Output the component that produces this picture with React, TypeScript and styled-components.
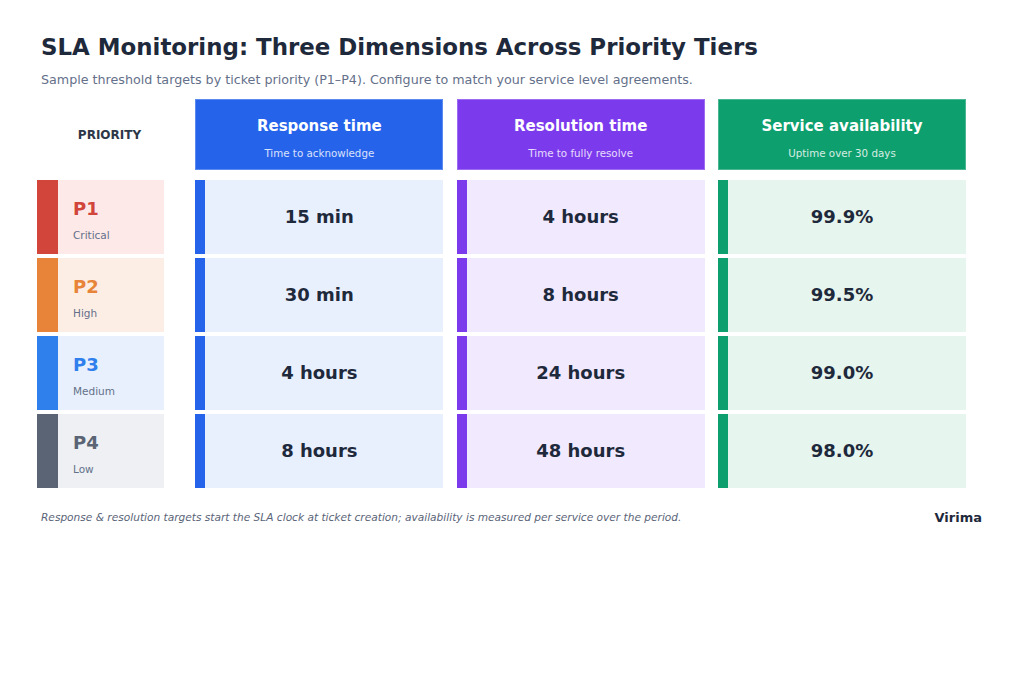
import { Fragment } from "react";
import styled, { createGlobalStyle } from "styled-components";

const GlobalStyle = createGlobalStyle`
  html, body {
    margin: 0;
    padding: 0;
    background: #ffffff;
  }
  body {
    font-family: "DejaVu Sans", "Liberation Sans", sans-serif;
    color: #1e293b;
  }
`;

const Page = styled.div`
  width: 1024px;
  height: 691px;
  box-sizing: border-box;
  padding: 33px 42px 0 41px;
`;

const Title = styled.h1`
  margin: 0;
  font-size: 22.9px;
  font-weight: 700;
  color: #1e293b;
  line-height: 28px;
`;

const Subtitle = styled.p`
  margin: 10px 0 0 0;
  font-size: 12.7px;
  color: #64708a;
  line-height: 18px;
`;

const Grid = styled.div`
  display: grid;
  grid-template-columns: 145px repeat(3, 248px);
  column-gap: 13.34px;
  margin-left: -4px;
`;

const HeaderGrid = styled(Grid)`
  margin-top: 10px;
  grid-template-rows: 71px;
`;

const BodyGrid = styled(Grid)`
  margin-top: 10px;
  grid-auto-rows: 73.5px;
  row-gap: 4.5px;
`;

const PriorityLabel = styled.div`
  display: flex;
  align-items: center;
  justify-content: center;
  font-size: 12px;
  font-weight: 700;
  color: #2d3748;
`;

const HeaderCell = styled.div<{ $color: string }>`
  background: ${(p) => p.$color};
  box-shadow: inset 0 0 0 1px rgba(255, 255, 255, 0.25);
  box-sizing: border-box;
  padding-top: 17px;
  display: flex;
  flex-direction: column;
  align-items: center;
  color: #ffffff;
`;

const HeaderTitle = styled.div`
  font-size: 15px;
  font-weight: 700;
  line-height: 20px;
`;

const HeaderSub = styled.div`
  font-size: 10.3px;
  line-height: 14px;
  margin-top: 10px;
  opacity: 0.82;
`;

const PriorityCell = styled.div<{ $strip: string; $bg: string }>`
  width: 127px;
  box-sizing: border-box;
  background: ${(p) => p.$bg};
  border-left: 21px solid ${(p) => p.$strip};
  padding: 18px 0 0 15px;
  display: flex;
  flex-direction: column;
`;

const PriorityCode = styled.div<{ $color: string }>`
  font-size: 18px;
  font-weight: 700;
  line-height: 22px;
  color: ${(p) => p.$color};
`;

const PriorityName = styled.div`
  font-size: 10.5px;
  line-height: 14px;
  margin-top: 8px;
  color: #64708a;
`;

const ValueCell = styled.div<{ $strip: string; $bg: string }>`
  background: ${(p) => p.$bg};
  border-left: 10px solid ${(p) => p.$strip};
  padding-right: 10px;
  display: flex;
  align-items: center;
  justify-content: center;
  font-size: 18px;
  font-weight: 700;
  color: #1e293b;
`;

const Footer = styled.div`
  margin-top: 22px;
  display: flex;
  justify-content: space-between;
  align-items: center;
`;

const FooterNote = styled.div`
  font-size: 10.6px;
  font-style: italic;
  color: #5a6478;
`;

const Brand = styled.div`
  font-size: 13px;
  font-weight: 700;
  color: #1e293b;
`;

const dimensions = [
  { title: "Response time", sub: "Time to acknowledge", color: "#2563eb", bg: "#e8f0fe" },
  { title: "Resolution time", sub: "Time to fully resolve", color: "#7c3aed", bg: "#f1e9fe" },
  { title: "Service availability", sub: "Uptime over 30 days", color: "#0e9f6e", bg: "#e6f5ee" },
];

const tiers = [
  { code: "P1", name: "Critical", strip: "#d1453b", bg: "#fde9e7", text: "#d1453b", values: ["15 min", "4 hours", "99.9%"] },
  { code: "P2", name: "High", strip: "#e8843a", bg: "#fdeee5", text: "#e8843a", values: ["30 min", "8 hours", "99.5%"] },
  { code: "P3", name: "Medium", strip: "#2f80ed", bg: "#e8f0fd", text: "#2f80ed", values: ["4 hours", "24 hours", "99.0%"] },
  { code: "P4", name: "Low", strip: "#5a6474", bg: "#eef0f3", text: "#5a6474", values: ["8 hours", "48 hours", "98.0%"] },
];

const App = () => (
  <>
    <GlobalStyle />
    <Page>
      <Title>SLA Monitoring: Three Dimensions Across Priority Tiers</Title>
      <Subtitle>
        Sample threshold targets by ticket priority (P1–P4). Configure to match your service level agreements.
      </Subtitle>
      <HeaderGrid>
        <PriorityLabel>PRIORITY</PriorityLabel>
        {dimensions.map((d) => (
          <HeaderCell key={d.title} $color={d.color}>
            <HeaderTitle>{d.title}</HeaderTitle>
            <HeaderSub>{d.sub}</HeaderSub>
          </HeaderCell>
        ))}
      </HeaderGrid>
      <BodyGrid>
        {tiers.map((t) => (
          <Fragment key={t.code}>
            <PriorityCell $strip={t.strip} $bg={t.bg}>
              <PriorityCode $color={t.text}>{t.code}</PriorityCode>
              <PriorityName>{t.name}</PriorityName>
            </PriorityCell>
            {t.values.map((v, i) => (
              <ValueCell key={i} $strip={dimensions[i].color} $bg={dimensions[i].bg}>
                {v}
              </ValueCell>
            ))}
          </Fragment>
        ))}
      </BodyGrid>
      <Footer>
        <FooterNote>
          Response &amp; resolution targets start the SLA clock at ticket creation; availability is measured per service over the period.
        </FooterNote>
        <Brand>Virima</Brand>
      </Footer>
    </Page>
  </>
);

export default App;
